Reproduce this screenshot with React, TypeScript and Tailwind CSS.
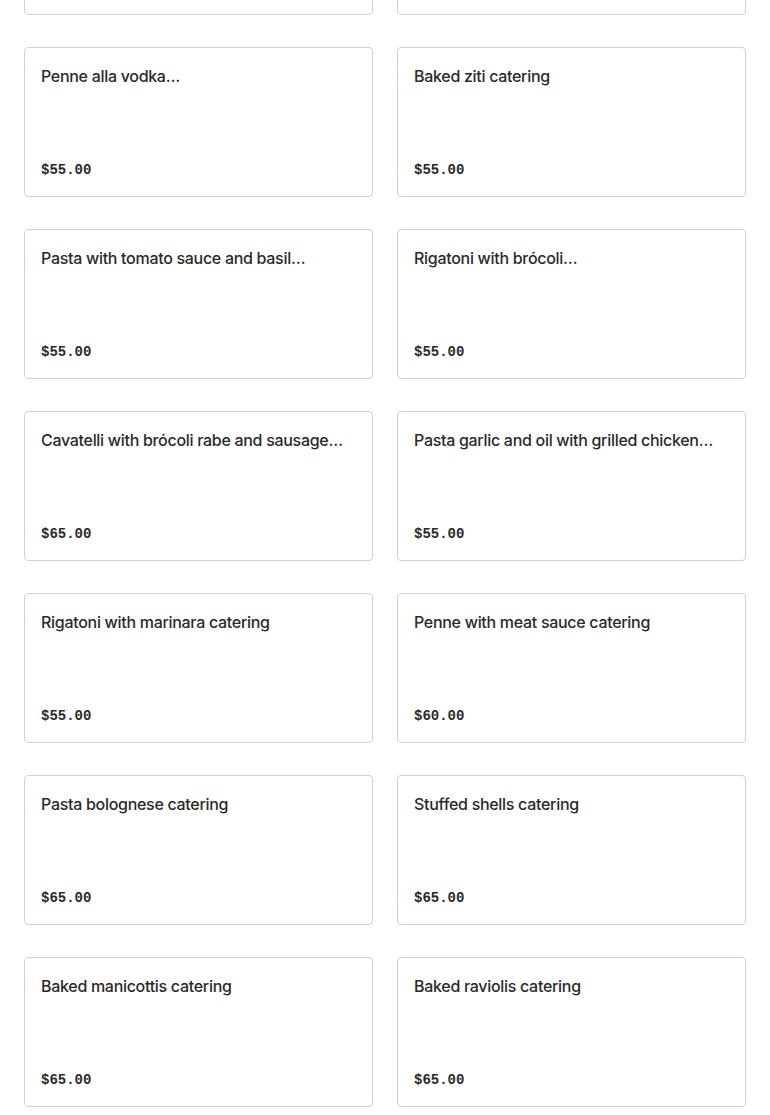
const items = [
  { name: 'Pasta primavera catering', price: '$55.00' },
  { name: 'Chicken parmigiana catering', price: '$65.00' },
  { name: 'Penne alla vodka…', price: '$55.00' },
  { name: 'Baked ziti catering', price: '$55.00' },
  { name: 'Pasta with tomato sauce and basil…', price: '$55.00' },
  { name: 'Rigatoni with brócoli…', price: '$55.00' },
  { name: 'Cavatelli with brócoli rabe and sausage…', price: '$65.00' },
  { name: 'Pasta garlic and oil with grilled chicken…', price: '$55.00' },
  { name: 'Rigatoni with marinara catering', price: '$55.00' },
  { name: 'Penne with meat sauce catering', price: '$60.00' },
  { name: 'Pasta bolognese catering', price: '$65.00' },
  { name: 'Stuffed shells catering', price: '$65.00' },
  { name: 'Baked manicottis catering', price: '$65.00' },
  { name: 'Baked raviolis catering', price: '$65.00' },
  { name: 'Lasagna catering', price: '$65.00' },
  { name: 'Eggplant parmigiana catering', price: '$65.00' },
];

export default function App() {
  return (
    <div className="bg-white min-h-screen overflow-hidden h-[1115px]">
      {/* scrolled list: first row sits mostly above the fold */}
      <div className="grid grid-cols-2 gap-x-6 gap-y-8 px-6 -mt-[135px]">
        {items.map((item) => (
          <button
            key={item.name}
            className="h-[150px] flex flex-col justify-between text-left p-4 border border-[#d0d0d0] rounded bg-white"
          >
            <p className="font-['Inter',sans-serif] text-base leading-6 font-medium tracking-[-0.3px] text-[#2a2a2a] truncate w-full">
              {item.name}
            </p>
            <p className="font-['Liberation_Mono',monospace] text-sm leading-5 font-bold text-[#2a2a2a]">
              {item.price}
            </p>
          </button>
        ))}
      </div>
    </div>
  );
}
